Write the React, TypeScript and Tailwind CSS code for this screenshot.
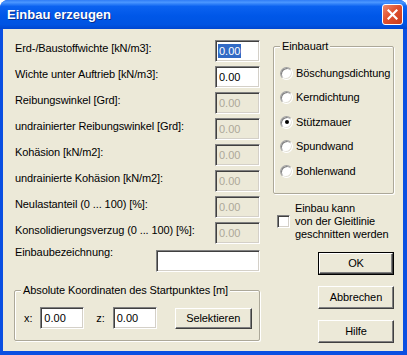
import { FC, ReactNode } from 'react';

const font = "font-['Liberation_Sans',Arial,sans-serif] text-[11px] tracking-[-0.1px] leading-[13px]";

const sunken =
  'border border-t-[#808080] border-l-[#808080] border-b-white border-r-white shadow-[inset_1px_1px_0_#404040,inset_-1px_-1px_0_#d4d0c8]';

const Field: FC<{ value?: string; disabled?: boolean; selected?: boolean; className?: string }> = ({
  value = '',
  disabled,
  selected,
  className = 'w-[45px]',
}) => (
  <div
    className={`${className} h-[22px] ${sunken} flex items-center pl-[3px] tracking-normal ${
      disabled ? 'bg-[#ece9d8] text-[#aca899]' : 'bg-white text-black'
    }`}
  >
    {selected ? (
      <span className="bg-[#316ac5] text-white px-[1px] -ml-[1px] leading-[14px]">{value}</span>
    ) : (
      <span>{value}</span>
    )}
  </div>
);

const Btn: FC<{ children: ReactNode; def?: boolean; className?: string }> = ({ children, def, className = 'w-[76px] h-[23px]' }) => (
  <div className={`${className} ${def ? 'border border-black' : ''}`}>
    <div className="w-full h-full border border-t-white border-l-white border-r-[#404040] border-b-[#404040] shadow-[inset_-1px_-1px_0_#808080] bg-[#ece9d8] flex items-center justify-center text-black">
      {children}
    </div>
  </div>
);

const Group: FC<{ title: string; className: string; children: ReactNode }> = ({ title, className, children }) => (
  <div className={`relative border border-[#aca899] shadow-[1px_1px_0_white,inset_1px_1px_0_white] rounded-[2px] ${className}`}>
    <span className="absolute -top-[7px] left-[6px] bg-[#ece9d8] px-[2px] text-black">{title}</span>
    {children}
  </div>
);

const Radio: FC<{ label: string; checked?: boolean }> = ({ label, checked }) => (
  <div className="h-[24.5px] flex items-center">
    <div className="w-[13px] h-[13px] rounded-full bg-white border border-t-[#a0a0a0] border-l-[#a0a0a0] border-b-white border-r-white shadow-[inset_1px_1px_0_#808080,inset_-1px_-1px_0_#e4e2d8] flex items-center justify-center">
      {checked && <div className="w-[4px] h-[4px] rounded-full bg-black" />}
    </div>
    <span className="ml-[3px]">{label}</span>
  </div>
);

const rows: { label: string; value: string; disabled?: boolean; selected?: boolean }[] = [
  { label: 'Erd-/Baustoffwichte [kN/m3]:', value: '0.00', selected: true },
  { label: 'Wichte unter Auftrieb [kN/m3]:', value: '0.00' },
  { label: 'Reibungswinkel [Grd]:', value: '0.00', disabled: true },
  { label: 'undrainierter Reibungswinkel [Grd]:', value: '0.00', disabled: true },
  { label: 'Kohäsion [kN/m2]:', value: '0.00', disabled: true },
  { label: 'undrainierte Kohäsion [kN/m2]:', value: '0.00', disabled: true },
  { label: 'Neulastanteil (0 ... 100) [%]:', value: '0.00', disabled: true },
  { label: 'Konsolidierungsverzug (0 ... 100) [%]:', value: '0.00', disabled: true },
];

const App: FC = () => {
  return (
    <div className={`w-[407px] h-[355px] bg-[#0a4fe2] rounded-t-[8px] flex flex-col overflow-hidden ${font}`}>
      <div className="h-[29px] shrink-0 flex items-center justify-between pl-[7px] pr-[4px] bg-[linear-gradient(to_bottom,#2f7cf6_0%,#4b97ff_8%,#0b62f0_22%,#0057e8_55%,#0054e2_85%,#0046d0_100%)]">
        <span className="font-['Liberation_Sans',Arial,sans-serif] font-bold text-[13px] tracking-normal text-white [text-shadow:1px_1px_0_#0a2f8f]">
          Einbau erzeugen
        </span>
        <div className="w-[21px] h-[21px] rounded-[3px] border border-white bg-[linear-gradient(135deg,#f08a6c_0%,#e0512f_45%,#c83c1c_100%)] flex items-center justify-center">
          <svg width="11" height="11" viewBox="0 0 11 11">
            <path d="M1.5 1.5 L9.5 9.5 M9.5 1.5 L1.5 9.5" stroke="white" strokeWidth="2.2" strokeLinecap="square" />
          </svg>
        </div>
      </div>

      <div className="flex-1 ml-[3px] mr-[4px] mb-[4px] bg-[#ece9d8] flex text-black">
        {/* left column */}
        <div className="w-[257px] pl-[12px] pt-[11px] flex flex-col">
          {rows.map((r) => (
            <div key={r.label} className="h-[26px] flex items-start justify-between">
              <span className="pt-[2px]">{r.label}</span>
              <Field value={r.value} disabled={r.disabled} selected={r.selected} />
            </div>
          ))}
          <div className="mt-[2px] flex items-start justify-between">
            <span className="-mt-[4px]">Einbaubezeichnung:</span>
            <Field className="w-[104px]" />
          </div>
          <Group title="Absolute Koordinaten des Startpunktes [m]" className="mt-[18px] -ml-[1px] w-[246px] h-[51px]">
            <div className="flex items-center pt-[16px] pl-[9px]">
              <span>x:</span>
              <Field value="0.00" className="ml-[8px] w-[44px]" />
              <span className="ml-[12px]">z:</span>
              <Field value="0.00" className="ml-[8px] w-[44px]" />
              <Btn className="ml-[18px] w-[77px] h-[21px]">Selektieren</Btn>
            </div>
          </Group>
        </div>

        {/* right column */}
        <div className="ml-[13px] w-[121px] pt-[17px] flex flex-col">
          <Group title="Einbauart" className="h-[148px] w-[121px]">
            <div className="pt-[14px] pl-[6px] flex flex-col">
              <Radio label="Böschungsdichtung" />
              <Radio label="Kerndichtung" />
              <Radio label="Stützmauer" checked />
              <Radio label="Spundwand" />
              <Radio label="Bohlenwand" />
            </div>
          </Group>
          <div className="mt-[8px] flex items-center">
            <div className={`w-[13px] h-[13px] ml-[4px] bg-white ${sunken}`} />
            <div className="ml-[5px]">
              <div>Einbau kann</div>
              <div>von der Gleitlinie</div>
              <div>geschnitten werden</div>
            </div>
          </div>
          <div className="mt-[11px] flex flex-col items-end gap-[11px]">
            <Btn def>OK</Btn>
            <Btn>Abbrechen</Btn>
            <Btn>Hilfe</Btn>
          </div>
        </div>
      </div>
    </div>
  );
};

export default App;
